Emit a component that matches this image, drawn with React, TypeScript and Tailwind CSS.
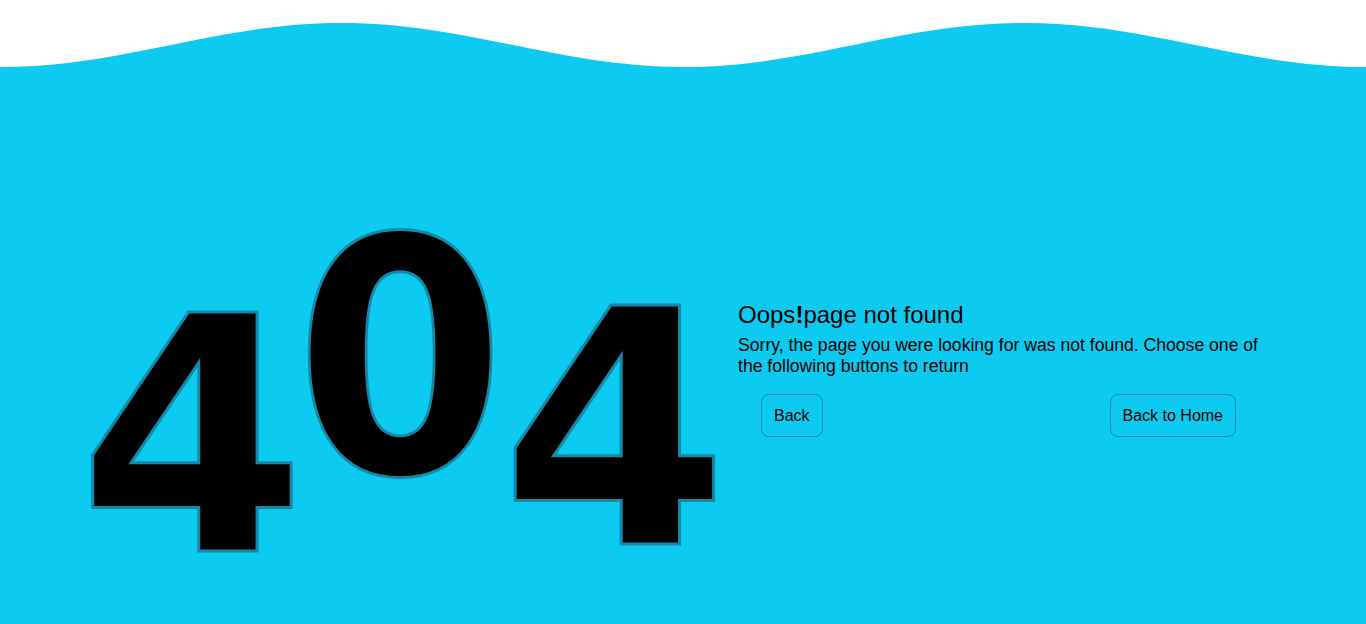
export default function App() {
  return (
    <div className="min-h-screen bg-[#0dcaf0] font-['Liberation_Sans',Arial,sans-serif] text-black">
      <svg className="block w-full h-[67px] bg-white" viewBox="0 0 1366 67" preserveAspectRatio="none">
        <path
          d="M0 67 C124 67 217 23 341.5 23 C466 23 559 67 683 67 C807 67 900 23 1024.5 23 C1149 23 1242 67 1366 67 Z"
          fill="#0dcaf0"
        />
      </svg>

      <div className="flex items-start pl-[78px] pt-[207px]">
        <div className="w-[660px] shrink-0 font-['DejaVu_Sans',sans-serif] font-bold text-[328px] leading-none whitespace-nowrap [-webkit-text-stroke:3px_#1589a6]">
          <span className="inline-block">4</span>
          <span className="inline-block ml-[-20px] -translate-y-[78px] scale-x-[0.925]">0</span>
          <span className="inline-block ml-[-14px] -translate-y-[7px]">4</span>
        </div>

        <div className="w-[540px] mt-[27px]">
          <h1 className="text-[24px] leading-[28px]">
            Oops<span className="font-bold">!</span>page not found
          </h1>
          <p className="mt-[6px] text-[17.6px] leading-[21px]">
            Sorry, the page you were looking for was not found. Choose one of the following buttons to return
          </p>
          <div className="flex justify-between mt-[17px] pl-[23px] pr-[42px]">
            <button className="px-3 py-[11px] text-[16px] leading-[19px] border border-[#1589a6] rounded-lg">
              Back
            </button>
            <button className="px-3 py-[11px] text-[16px] leading-[19px] border border-[#1589a6] rounded-lg">
              Back to Home
            </button>
          </div>
        </div>
      </div>
    </div>
  );
}
